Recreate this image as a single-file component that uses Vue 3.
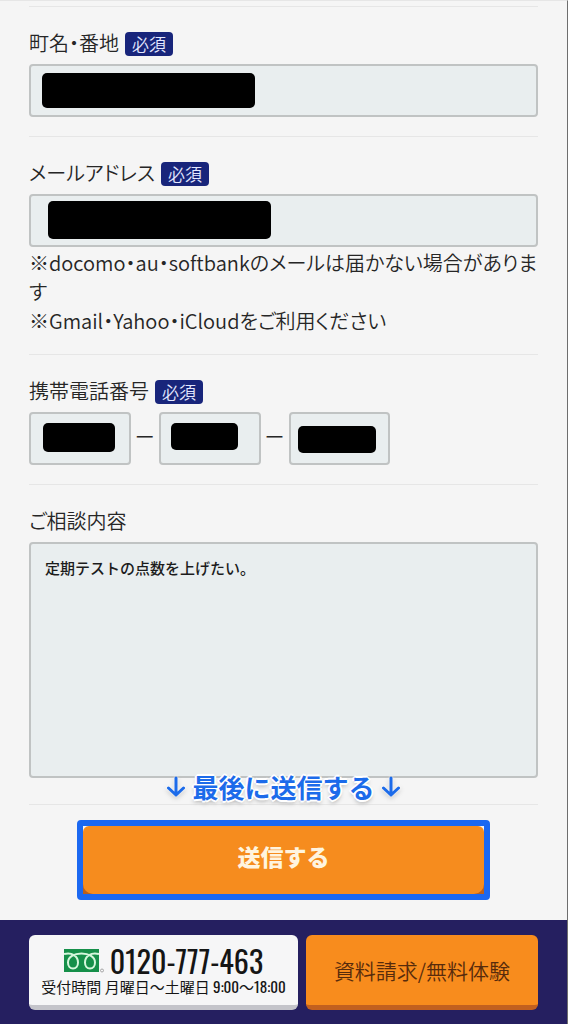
<template>
  <div class="page">
    <form class="form" @submit.prevent>
      <div class="field">
        <div class="field-head">
          <label for="street">町名・番地</label>
          <span class="required">必須</span>
        </div>
        <div class="control">
          <input id="street" class="box" type="text">
          <span class="mask mask-street"></span>
        </div>
      </div>

      <div class="field">
        <div class="field-head">
          <label for="email">メールアドレス</label>
          <span class="required">必須</span>
        </div>
        <div class="control">
          <input id="email" class="box" type="email">
          <span class="mask mask-email"></span>
        </div>
        <p class="note">※docomo・au・softbankのメールは届かない場合があります<br>※Gmail・Yahoo・iCloudをご利用ください</p>
      </div>

      <div class="field">
        <div class="field-head">
          <label for="tel-1">携帯電話番号</label>
          <span class="required">必須</span>
        </div>
        <div class="tel">
          <template v-for="n in 3" :key="n">
            <span v-if="n > 1" class="dash">ー</span>
            <div class="control tel-part">
              <input :id="`tel-${n}`" class="box" type="tel" :aria-label="`携帯電話番号 ${n}`">
              <span class="mask" :class="`mask-tel-${n}`"></span>
            </div>
          </template>
        </div>
      </div>

      <div class="field field-message">
        <div class="field-head">
          <label for="message">ご相談内容</label>
        </div>
        <textarea id="message" v-model="message" class="box message"></textarea>
        <p class="callout">
          <svg class="arrow" viewBox="0 0 20 22"><path d="M10 2v17M2.500 12l7.500 7 7.500-7" /></svg>
          <span>最後に送信する</span>
          <svg class="arrow" viewBox="0 0 20 22"><path d="M10 2v17M2.500 12l7.500 7 7.500-7" /></svg>
        </p>
      </div>

      <div class="submit-frame">
        <button class="submit" type="submit">送信する</button>
      </div>
    </form>

    <footer class="footer">
      <a class="footer-btn phone" href="tel:0120777463">
        <span class="phone-row">
          <svg class="freedial" viewBox="0 0 40 24">
            <rect width="35" height="23" fill="#16904a" />
            <path
              d="M0 5C8 3 14 7 14 13.500C14 17 12 19.500 9 19.500S4 17 4 13.500C4 8 10 4.500 17.500 4.500S31 8 31 13.500C31 17 29 19.500 26 19.500S21 17 21 13.500C21 7 27 3 35 5"
              fill="none" stroke="#d5f7dc" stroke-width="2"
            />
            <circle cx="38" cy="21.500" r="1.500" fill="none" stroke="#888" stroke-width=".7" />
          </svg>
          <span class="number">0120-777-463</span>
        </span>
        <span class="hours">受付時間 月曜日～土曜日 9:00～18:00</span>
      </a>
      <a class="footer-btn trial" href="#">資料請求/無料体験</a>
    </footer>
  </div>
</template>

<script setup>
import { ref } from 'vue'

const message = ref('定期テストの点数を上げたい。')
</script>

<style>
body {
  margin: 0;
  background: #f5f5f5;
}
</style>

<style scoped>
.page {
  border-top: 1px solid #e6e6e6;
  border-right: 1px solid #6e6e6e;
  background: #f5f5f5;
  color: #262626;
  font-family: "Noto Sans CJK JP", sans-serif;
  font-size: 20px;
  font-weight: 350;
  font-feature-settings: "palt";
}

.page *,
.page {
  box-sizing: border-box;
}

.form {
  padding: 5px 29px 20px;
}

.field {
  position: relative;
  padding: 20px 0 19px;
  border-bottom: 1px solid #e6e6e6;
}

.field:first-child {
  border-top: 1px solid #e6e6e6;
}

.field-message {
  padding-bottom: 26px;
}

.field-head {
  display: flex;
  align-items: center;
  gap: 6px;
  height: 30px;
  margin-bottom: 7px;
}

.required {
  height: 24px;
  margin-top: 4px;
  padding: 0 7px;
  border-radius: 4px;
  background: #18257b;
  color: #e4e8ff;
  font-size: 17px;
  line-height: 24px;
}

.control {
  position: relative;
}

.box {
  display: block;
  width: 100%;
  height: 53px;
  padding: 0 14px;
  border: 2px solid #c0c3c3;
  border-radius: 4px;
  background: #e9eeef;
  color: #1c1c1c;
  font-family: inherit;
  font-size: 15px;
  outline: none;
}

.message {
  height: 236px;
  padding: 12px 14px;
  font-weight: 500;
  line-height: 24px;
  resize: none;
}

.mask {
  position: absolute;
  border-radius: 5px;
  background: #000;
}

.mask-street {
  top: 9px;
  left: 13px;
  width: 213px;
  height: 35px;
}

.mask-email {
  top: 7px;
  left: 19px;
  width: 223px;
  height: 38px;
}

.mask-tel-1 {
  top: 11px;
  left: 14px;
  width: 72px;
  height: 29px;
}

.mask-tel-2 {
  top: 11px;
  left: 12px;
  width: 67px;
  height: 27px;
}

.mask-tel-3 {
  top: 14px;
  left: 9px;
  width: 78px;
  height: 27px;
}

.note {
  margin: 1px 0 0;
  line-height: 29px;
}

.tel {
  display: flex;
  align-items: center;
}

.tel-part {
  width: 20%;
}

.dash {
  width: 28px;
  padding-bottom: 4px;
  text-align: center;
}

.callout {
  position: absolute;
  right: 0;
  bottom: -1px;
  left: 0;
  display: flex;
  justify-content: center;
  align-items: center;
  gap: 6px;
  margin: 0;
  color: #1c6bea;
  font-size: 26px;
  font-weight: 700;
  font-feature-settings: normal;
  line-height: 36px;
  text-shadow: 2px 0 #fff, -2px 0 #fff, 0 2px #fff, 0 -2px #fff, 1px 1px #fff, -1px -1px #fff, 0 3px 4px #aaa;
}

.arrow {
  width: 20px;
  height: 22px;
  fill: none;
  stroke: #1c6bea;
  stroke-width: 3;
  stroke-linecap: round;
  stroke-linejoin: round;
  filter: drop-shadow(0 0 1px #fff) drop-shadow(0 2px 2px #ccc);
}

.submit-frame {
  width: 81%;
  margin: 15px auto 0;
  border: 6px solid #1b68f1;
  border-radius: 4px;
  background: linear-gradient(#f5f5f5 50%, #b8601f 50%);
}

.submit {
  display: block;
  width: 100%;
  height: 68px;
  padding: 0 0 8px;
  border: none;
  border-radius: 6px 6px 10px 10px;
  background: #f68c1e;
  color: #fff4df;
  font-family: inherit;
  font-size: 23px;
  font-weight: 900;
}

.footer {
  display: flex;
  gap: 8px;
  padding: 15px 29px 14px;
  background: #251f60;
}

.footer-btn {
  display: flex;
  flex-direction: column;
  align-items: center;
  justify-content: center;
  height: 75px;
  border-bottom: 5px solid;
  border-radius: 6px;
  text-decoration: none;
}

.phone {
  flex: 269;
  border-color: #c4c4ca;
  background: #f6f6f7;
  color: #151515;
}

.trial {
  flex: 232;
  border-color: #c2601f;
  background: #f88c1d;
  color: #572b0c;
  font-size: 21px;
  font-feature-settings: normal;
}

.phone-row {
  display: flex;
  align-items: center;
  gap: 6px;
  height: 32px;
}

.freedial {
  width: 40px;
  height: 24px;
}

.number {
  font-family: Oswald, "Liberation Sans Narrow", "Roboto Condensed", sans-serif;
  font-size: 30px;
  font-weight: 400;
  line-height: 34px;
}

.hours {
  font-family: Oswald, "Liberation Sans Narrow", "Noto Sans CJK JP", sans-serif;
  font-size: 15px;
  font-weight: 400;
  line-height: 18px;
  white-space: nowrap;
}
</style>
